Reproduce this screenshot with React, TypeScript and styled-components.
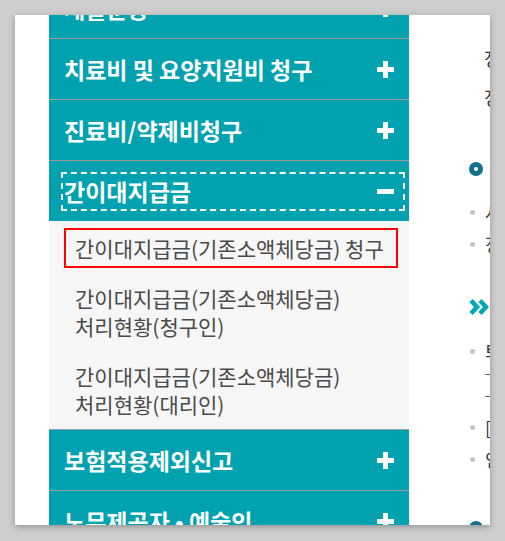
import React from "react";
import styled, { createGlobalStyle } from "styled-components";

const GlobalStyle = createGlobalStyle`
  html, body {
    margin: 0;
    padding: 0;
    background: #cdcdcd;
  }
  body {
    padding: 15px;
    font-family: "Noto Sans CJK KR", "Noto Sans", sans-serif;
  }
  ul {
    margin: 0;
    padding: 0;
    list-style: none;
  }
`;

const Panel = styled.div`
  width: 475px;
  height: 510px;
  box-sizing: border-box;
  padding-left: 34px;
  display: flex;
  overflow: hidden;
  background: #fff;
  box-shadow: 0 2px 6px rgba(0, 0, 0, 0.28);
`;

const Sidebar = styled.ul`
  width: 360px;
  flex-shrink: 0;
  align-self: flex-start;
  margin-top: -37px !important;
`;

const MenuItem = styled.li`
  border-bottom: 1px solid #9c9c9c;
`;

const Header = styled.div`
  height: 60px;
  display: flex;
  align-items: center;
  padding: 0 6px 0 14px;
  background: #00a2b0;
`;

const HeaderLink = styled.a<{ $focused?: boolean }>`
  flex: 1;
  height: 35px;
  display: flex;
  align-items: center;
  justify-content: space-between;
  padding: 0 9px 0 1px;
  color: #fff;
  font-size: 23px;
  font-weight: 700;
  white-space: nowrap;
  text-decoration: none;
  outline: ${({ $focused }) => ($focused ? "2px dashed #fff" : "none")};

  svg {
    flex-shrink: 0;
  }
`;

const SubList = styled.ul`
  display: flex;
  flex-direction: column;
  gap: 10px;
  padding: 7px 0 5px !important;
  background: #f6f6f6;
`;

const SubLink = styled.a<{ $focused?: boolean }>`
  display: block;
  margin: 0 11px 0 15px;
  padding: 4px 4px 4px 9px;
  border: 2px solid ${({ $focused }) => ($focused ? "#ff0000" : "transparent")};
  color: #4a4a4a;
  font-size: 21px;
  line-height: 28px;
  white-space: nowrap;
  text-decoration: none;
`;

const Content = styled.div`
  flex: 1;
  min-width: 0;
  padding: 24px 0 0 60px;
  white-space: nowrap;
  color: #333;
  font-size: 18px;
`;

const Para = styled.p`
  margin: 0 0 0 15px;
  line-height: 39px;
`;

const Heading = styled.h3<{ $gap: number }>`
  display: flex;
  align-items: center;
  gap: 10px;
  margin: ${({ $gap }) => $gap}px 0 0;
  height: 24px;
  font-size: 18px;
  color: #1a1a1a;

  & > * {
    flex-shrink: 0;
  }
`;

const Ring = styled.span`
  width: 14px;
  height: 14px;
  box-sizing: border-box;
  border: 5px solid #136f8e;
  border-radius: 50%;
`;

const Bullets = styled.ul<{ $gap: number }>`
  margin-top: ${({ $gap }) => $gap}px !important;
  display: flex;
  flex-direction: column;
  gap: 10px;
`;

const Bullet = styled.li`
  display: flex;
  align-items: flex-start;
  line-height: 22px;
`;

const Dot = styled.span`
  width: 5px;
  height: 5px;
  margin: 9px 10px 0 1px;
  border-radius: 50%;
  background: #c4c4c4;
  flex-shrink: 0;
`;

const Plus = () => (
  <svg width="17" height="17" viewBox="0 0 17 17">
    <rect x="6" y="0" width="5" height="17" fill="#fff" />
    <rect x="0" y="6" width="17" height="5" fill="#fff" />
  </svg>
);

const Minus = () => (
  <svg width="17" height="17" viewBox="0 0 17 17">
    <rect x="0" y="6" width="17" height="5" fill="#fff" />
  </svg>
);

const Chevrons = () => (
  <svg width="20" height="16" viewBox="0 0 20 16">
    <path d="M2 1.5 L8 8 L2 14.5" fill="none" stroke="#00a7b5" strokeWidth="4.5" />
    <path d="M11 1.5 L17 8 L11 14.5" fill="none" stroke="#00a7b5" strokeWidth="4.5" />
  </svg>
);

const menus = [
  "재활운동",
  "치료비 및 요양지원비 청구",
  "진료비/약제비청구",
];

const subMenus = [
  ["간이대지급금(기존소액체당금) 청구"],
  ["간이대지급금(기존소액체당금)", "처리현황(청구인)"],
  ["간이대지급금(기존소액체당금)", "처리현황(대리인)"],
];

const App = () => {
  return (
    <>
      <GlobalStyle />
      <Panel>
        <Sidebar>
          {menus.map((title) => (
            <MenuItem key={title}>
              <Header>
                <HeaderLink href="#">
                  {title}
                  <Plus />
                </HeaderLink>
              </Header>
            </MenuItem>
          ))}
          <MenuItem>
            <Header>
              <HeaderLink href="#" $focused>
                간이대지급금
                <Minus />
              </HeaderLink>
            </Header>
            <SubList>
              {subMenus.map((lines, i) => (
                <li key={i}>
                  <SubLink href="#" $focused={i === 0}>
                    {lines.map((line, j) => (
                      <React.Fragment key={j}>
                        {j > 0 && <br />}
                        {line}
                      </React.Fragment>
                    ))}
                  </SubLink>
                </li>
              ))}
            </SubList>
          </MenuItem>
          <MenuItem>
            <Header>
              <HeaderLink href="#">
                보험적용제외신고
                <Plus />
              </HeaderLink>
            </Header>
          </MenuItem>
          <MenuItem>
            <Header>
              <HeaderLink href="#">
                노무제공자 • 예술인
                <Plus />
              </HeaderLink>
            </Header>
          </MenuItem>
        </Sidebar>

        <Content>
          <Para>
            정부가 사업주를 대신하여 지급하는 제도입니다.
            <br />
            정해진 기간 내에 청구하시기 바랍니다.
          </Para>
          <Heading $gap={40}>
            <Ring />
            청구 대상
          </Heading>
          <Bullets $gap={20}>
            <Bullet>
              <Dot />
              사업장에서 퇴직한 근로자
            </Bullet>
            <Bullet>
              <Dot />
              정해진 확인을 받은 근로자
            </Bullet>
          </Bullets>
          <Heading $gap={40}>
            <Chevrons />
            유의 사항
          </Heading>
          <Bullets $gap={21}>
            <Bullet>
              <Dot />
              <span>
                퇴직일로부터 2년 이내 청구
                <br />
                ─ 판결 확정일로부터
                <br />
                ─ 1년 이내 청구
              </span>
            </Bullet>
            <Bullet>
              <Dot />
              [첨부서류] 확인서 사본
            </Bullet>
            <Bullet>
              <Dot />
              인터넷 청구 가능
            </Bullet>
          </Bullets>
          <Heading $gap={46}>
            <Ring />
            문의처
          </Heading>
        </Content>
      </Panel>
    </>
  );
};

export default App;
